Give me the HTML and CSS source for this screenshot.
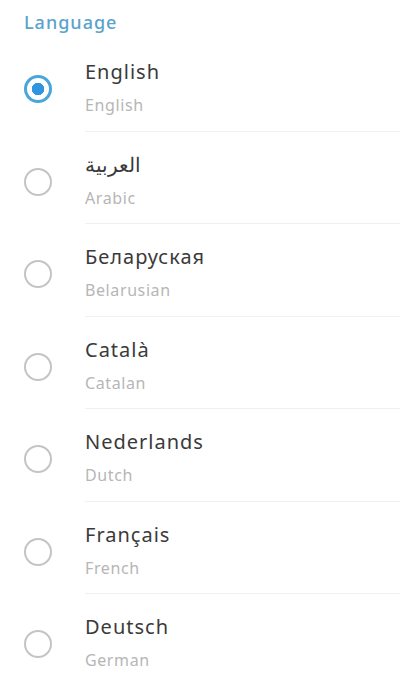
FILE: index.html
```html
<!DOCTYPE html>
<html>
<head>
<meta charset="utf-8">
<link rel="stylesheet" href="styles.css">
</head>
<body>
<div class="screen">
  <div class="header">Language</div>
  <ul class="list">
    <li class="row">
      <span class="radio checked"></span>
      <div class="texts"><div class="title">English</div><div class="sub">English</div></div>
    </li>
    <li class="row">
      <span class="radio"></span>
      <div class="texts"><div class="title arabic">العربية</div><div class="sub">Arabic</div></div>
    </li>
    <li class="row">
      <span class="radio"></span>
      <div class="texts"><div class="title">Беларуская</div><div class="sub">Belarusian</div></div>
    </li>
    <li class="row">
      <span class="radio"></span>
      <div class="texts"><div class="title">Català</div><div class="sub">Catalan</div></div>
    </li>
    <li class="row">
      <span class="radio"></span>
      <div class="texts"><div class="title">Nederlands</div><div class="sub">Dutch</div></div>
    </li>
    <li class="row">
      <span class="radio"></span>
      <div class="texts"><div class="title">Français</div><div class="sub">French</div></div>
    </li>
    <li class="row">
      <span class="radio"></span>
      <div class="texts"><div class="title">Deutsch</div><div class="sub">German</div></div>
    </li>
  </ul>
</div>
</body>
</html>
```
FILE: styles.css
```css
* { box-sizing: border-box; }
html, body { margin: 0; padding: 0; background: #fff; }
body { font-family: "Noto Sans", Roboto, sans-serif; width: 400px; height: 683px; overflow: hidden; }
.screen { padding-top: 10px; }
.header {
  padding-left: 24px;
  font-size: 18px;
  font-weight: 500;
  letter-spacing: 1px;
  line-height: 24px;
  color: #5aa3cc;
  height: 29px;
}
.list { list-style: none; margin: 0; padding: 0; }
.row {
  display: flex;
  align-items: stretch;
  height: 92.5px;
}
.radio {
  flex: 0 0 auto;
  width: 28px;
  height: 28px;
  margin: 36px 0 0 24px;
  border: 2px solid #c4c4c4;
  border-radius: 50%;
}
.radio.checked {
  border: 3px solid #4aa6da;
  background: radial-gradient(circle, #2f95e0 0 6px, #fff 6.5px);
}
.texts {
  flex: 1;
  margin-left: 33px;
  padding-top: 20px;
  border-bottom: 1px solid #f0f0f0;
}
.title {
  font-size: 20px;
  letter-spacing: 1px;
  line-height: 26px;
  color: #3a3a3a;
}
.title.arabic { letter-spacing: 0; font-size: 20px; }
.sub {
  margin-top: 10px;
  font-size: 16px;
  letter-spacing: 0.6px;
  line-height: 20px;
  color: #b6b6b6;
}
```
